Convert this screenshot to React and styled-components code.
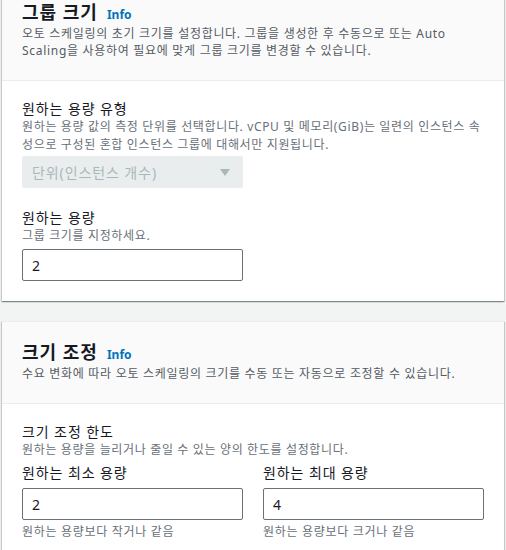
import React from 'react';
import styled, { createGlobalStyle } from 'styled-components';

const GlobalStyle = createGlobalStyle`
    body {
        margin: 0;
        background: #f2f3f3;
        font-family: "Noto Sans", "Noto Sans CJK KR", sans-serif;
        color: #16191f;
    }
`
const Page = styled.div`
    padding: 0 2px;
    margin-top: -19px;
    display: flex;
    flex-direction: column;
    gap: 20px;
`
const Card = styled.section`
    background: #ffffff;
    box-shadow: 0 1px 1px 0 rgba(0, 28, 36, 0.3), 1px 1px 1px 0 rgba(0, 28, 36, 0.15), -1px 1px 1px 0 rgba(0, 28, 36, 0.15);
    border-top: 1px solid #eaeded;
`
const Header = styled.div`
    background: #fafafa;
    border-bottom: 1px solid #eaeded;
    padding: 19px 20px 21px;
`
const TitleRow = styled.div`
    display: flex;
    align-items: baseline;
    gap: 9px;
    height: 22px;
`
const Title = styled.h2`
    margin: 0;
    font-size: 18px;
    font-weight: 700;
    line-height: 22px;
    letter-spacing: 1px;
`
const Info = styled.a`
    font-size: 12px;
    font-weight: 700;
    color: #0073bb;
    text-decoration: none;
`
const HeaderDesc = styled.p`
    margin: 2px 0 0;
    font-size: 12px;
    line-height: 17px;
    letter-spacing: 0.7px;
    color: #545b64;
    white-space: nowrap;
`
const Body = styled.div`
    padding: 19px 20px 20px;
    display: flex;
    flex-direction: column;
    gap: 21px;
`
const Field = styled.div`
    display: flex;
    flex-direction: column;
`
const Label = styled.div`
    font-size: 14px;
    line-height: 18px;
    letter-spacing: 0.9px;
`
const Desc = styled.div`
    font-size: 12px;
    line-height: 18px;
    letter-spacing: 0.65px;
    color: #687078;
    white-space: nowrap;
`
const Hint = styled.div`
    font-size: 12px;
    line-height: 17px;
    letter-spacing: 0.7px;
    color: #687078;
    margin-top: 3px;
`
const Grid = styled.div`
    display: grid;
    grid-template-columns: 1fr 1fr;
    column-gap: 20px;
    margin-top: ${p => p.top || 0}px;
`
const Select = styled.div`
    height: 32px;
    box-sizing: border-box;
    background: #eaeded;
    border-radius: 2px;
    display: flex;
    align-items: center;
    justify-content: space-between;
    padding: 0 13px 0 10px;
    font-size: 14px;
    letter-spacing: 0.9px;
    color: #aab7b8;
`
const Input = styled.div`
    height: 32px;
    box-sizing: border-box;
    border: 1px solid #687078;
    border-radius: 2px;
    display: flex;
    align-items: center;
    padding: 0 9px;
    font-size: 14px;
    color: #16191f;
    margin-top: ${p => p.top || 0}px;
`

const Caret = () => (
    <svg width="10" height="7" viewBox="0 0 10 7">
        <path d="M0 0 L10 0 L5 7 Z" fill="#aab7b8" />
    </svg>
)

const App = () => {
    return (
        <Page>
            <GlobalStyle />
            <Card>
                <Header>
                    <TitleRow>
                        <Title>그룹 크기</Title>
                        <Info>Info</Info>
                    </TitleRow>
                    <HeaderDesc>
                        오토 스케일링의 초기 크기를 설정합니다. 그룹을 생성한 후 수동으로 또는 Auto<br />
                        Scaling을 사용하여 필요에 맞게 그룹 크기를 변경할 수 있습니다.
                    </HeaderDesc>
                </Header>
                <Body>
                    <Field>
                        <Label>원하는 용량 유형</Label>
                        <Desc>
                            원하는 용량 값의 측정 단위를 선택합니다. vCPU 및 메모리(GiB)는 일련의 인스턴스 속<br />
                            성으로 구성된 혼합 인스턴스 그룹에 대해서만 지원됩니다.
                        </Desc>
                        <Grid top={2}>
                            <Select>
                                <span>단위(인스턴스 개수)</span>
                                <Caret />
                            </Select>
                        </Grid>
                    </Field>
                    <Field>
                        <Label>원하는 용량</Label>
                        <Desc>그룹 크기를 지정하세요.</Desc>
                        <Grid top={4}>
                            <Input>2</Input>
                        </Grid>
                    </Field>
                </Body>
            </Card>
            <Card>
                <Header>
                    <TitleRow>
                        <Title>크기 조정</Title>
                        <Info>Info</Info>
                    </TitleRow>
                    <HeaderDesc>수요 변화에 따라 오토 스케일링의 크기를 수동 또는 자동으로 조정할 수 있습니다.</HeaderDesc>
                </Header>
                <Body>
                    <Field>
                        <Label>크기 조정 한도</Label>
                        <Desc>원하는 용량을 늘리거나 줄일 수 있는 양의 한도를 설정합니다.</Desc>
                        <Grid top={5}>
                            <Field>
                                <Label>원하는 최소 용량</Label>
                                <Input top={6}>2</Input>
                                <Hint>원하는 용량보다 작거나 같음</Hint>
                            </Field>
                            <Field>
                                <Label>원하는 최대 용량</Label>
                                <Input top={6}>4</Input>
                                <Hint>원하는 용량보다 크거나 같음</Hint>
                            </Field>
                        </Grid>
                    </Field>
                </Body>
            </Card>
        </Page>
    );
}

export default App;
